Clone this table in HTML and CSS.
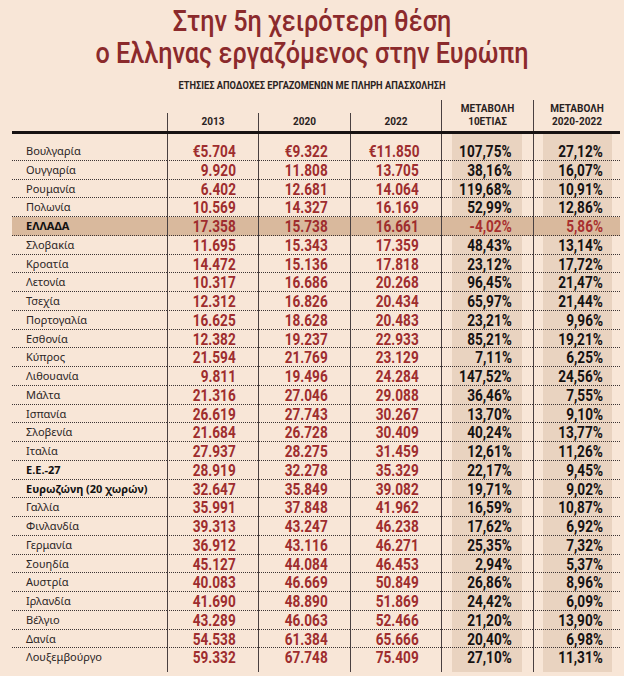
FILE: index.html
```html
<!DOCTYPE html>
<html lang="el">
<head>
<meta charset="utf-8">
<title>Στην 5η χειρότερη θέση</title>
<link rel="stylesheet" href="styles.css">
</head>
<body>
<div class="page">
  <h1 class="title"><span class="tline">Στην 5η χειρότερη θέση</span><span class="tline">ο Ελληνας εργαζόμενος στην Ευρώπη</span></h1>
  <p class="subtitle">ΕΤΗΣΙΕΣ ΑΠΟΔΟΧΕΣ ΕΡΓΑΖΟΜΕΝΩΝ ΜΕ ΠΛΗΡΗ ΑΠΑΣΧΟΛΗΣΗ</p>
  <div class="table">
    <div class="thead">
      <div class="th th-name"></div>
      <div class="th">2013</div>
      <div class="th">2020</div>
      <div class="th">2022</div>
      <div class="th th-chg">ΜΕΤΑΒΟΛΗ<br>10ΕΤΙΑΣ</div>
      <div class="th th-chg">ΜΕΤΑΒΟΛΗ<br>2020-2022</div>
    </div>
    <div class="tbody">
      <div class="row"><div class="c name">Βουλγαρία</div><div class="c num"><span>€5.704</span></div><div class="c num"><span>€9.322</span></div><div class="c num"><span>€11.850</span></div><div class="c pct b1"><span>107,75%</span></div><div class="c pct b2"><span>27,12%</span></div></div>
      <div class="row"><div class="c name">Ουγγαρία</div><div class="c num"><span>9.920</span></div><div class="c num"><span>11.808</span></div><div class="c num"><span>13.705</span></div><div class="c pct b1"><span>38,16%</span></div><div class="c pct b2"><span>16,07%</span></div></div>
      <div class="row"><div class="c name">Ρουμανία</div><div class="c num"><span>6.402</span></div><div class="c num"><span>12.681</span></div><div class="c num"><span>14.064</span></div><div class="c pct b1"><span>119,68%</span></div><div class="c pct b2"><span>10,91%</span></div></div>
      <div class="row"><div class="c name">Πολωνία</div><div class="c num"><span>10.569</span></div><div class="c num"><span>14.327</span></div><div class="c num"><span>16.169</span></div><div class="c pct b1"><span>52,99%</span></div><div class="c pct b2"><span>12,86%</span></div></div>
      <div class="row hl"><div class="c name strong">ΕΛΛΑΔΑ</div><div class="c num"><span>17.358</span></div><div class="c num"><span>15.738</span></div><div class="c num"><span>16.661</span></div><div class="c pct b1 red"><span>-4,02%</span></div><div class="c pct b2 red"><span>5,86%</span></div></div>
      <div class="row"><div class="c name">Σλοβακία</div><div class="c num"><span>11.695</span></div><div class="c num"><span>15.343</span></div><div class="c num"><span>17.359</span></div><div class="c pct b1"><span>48,43%</span></div><div class="c pct b2"><span>13,14%</span></div></div>
      <div class="row"><div class="c name">Κροατία</div><div class="c num"><span>14.472</span></div><div class="c num"><span>15.136</span></div><div class="c num"><span>17.818</span></div><div class="c pct b1"><span>23,12%</span></div><div class="c pct b2"><span>17,72%</span></div></div>
      <div class="row"><div class="c name">Λετονία</div><div class="c num"><span>10.317</span></div><div class="c num"><span>16.686</span></div><div class="c num"><span>20.268</span></div><div class="c pct b1"><span>96,45%</span></div><div class="c pct b2"><span>21,47%</span></div></div>
      <div class="row"><div class="c name">Τσεχία</div><div class="c num"><span>12.312</span></div><div class="c num"><span>16.826</span></div><div class="c num"><span>20.434</span></div><div class="c pct b1"><span>65,97%</span></div><div class="c pct b2"><span>21,44%</span></div></div>
      <div class="row"><div class="c name">Πορτογαλία</div><div class="c num"><span>16.625</span></div><div class="c num"><span>18.628</span></div><div class="c num"><span>20.483</span></div><div class="c pct b1"><span>23,21%</span></div><div class="c pct b2"><span>9,96%</span></div></div>
      <div class="row"><div class="c name">Εσθονία</div><div class="c num"><span>12.382</span></div><div class="c num"><span>19.237</span></div><div class="c num"><span>22.933</span></div><div class="c pct b1"><span>85,21%</span></div><div class="c pct b2"><span>19,21%</span></div></div>
      <div class="row"><div class="c name">Κύπρος</div><div class="c num"><span>21.594</span></div><div class="c num"><span>21.769</span></div><div class="c num"><span>23.129</span></div><div class="c pct b1"><span>7,11%</span></div><div class="c pct b2"><span>6,25%</span></div></div>
      <div class="row"><div class="c name">Λιθουανία</div><div class="c num"><span>9.811</span></div><div class="c num"><span>19.496</span></div><div class="c num"><span>24.284</span></div><div class="c pct b1"><span>147,52%</span></div><div class="c pct b2"><span>24,56%</span></div></div>
      <div class="row"><div class="c name">Μάλτα</div><div class="c num"><span>21.316</span></div><div class="c num"><span>27.046</span></div><div class="c num"><span>29.088</span></div><div class="c pct b1"><span>36,46%</span></div><div class="c pct b2"><span>7,55%</span></div></div>
      <div class="row"><div class="c name">Ισπανία</div><div class="c num"><span>26.619</span></div><div class="c num"><span>27.743</span></div><div class="c num"><span>30.267</span></div><div class="c pct b1"><span>13,70%</span></div><div class="c pct b2"><span>9,10%</span></div></div>
      <div class="row"><div class="c name">Σλοβενία</div><div class="c num"><span>21.684</span></div><div class="c num"><span>26.728</span></div><div class="c num"><span>30.409</span></div><div class="c pct b1"><span>40,24%</span></div><div class="c pct b2"><span>13,77%</span></div></div>
      <div class="row"><div class="c name">Ιταλία</div><div class="c num"><span>27.937</span></div><div class="c num"><span>28.275</span></div><div class="c num"><span>31.459</span></div><div class="c pct b1"><span>12,61%</span></div><div class="c pct b2"><span>11,26%</span></div></div>
      <div class="row"><div class="c name strong">Ε.Ε.-27</div><div class="c num"><span>28.919</span></div><div class="c num"><span>32.278</span></div><div class="c num"><span>35.329</span></div><div class="c pct b1"><span>22,17%</span></div><div class="c pct b2"><span>9,45%</span></div></div>
      <div class="row"><div class="c name strong">Ευρωζώνη (20 χωρών)</div><div class="c num"><span>32.647</span></div><div class="c num"><span>35.849</span></div><div class="c num"><span>39.082</span></div><div class="c pct b1"><span>19,71%</span></div><div class="c pct b2"><span>9,02%</span></div></div>
      <div class="row"><div class="c name">Γαλλία</div><div class="c num"><span>35.991</span></div><div class="c num"><span>37.848</span></div><div class="c num"><span>41.962</span></div><div class="c pct b1"><span>16,59%</span></div><div class="c pct b2"><span>10,87%</span></div></div>
      <div class="row"><div class="c name">Φινλανδία</div><div class="c num"><span>39.313</span></div><div class="c num"><span>43.247</span></div><div class="c num"><span>46.238</span></div><div class="c pct b1"><span>17,62%</span></div><div class="c pct b2"><span>6,92%</span></div></div>
      <div class="row"><div class="c name">Γερμανία</div><div class="c num"><span>36.912</span></div><div class="c num"><span>43.116</span></div><div class="c num"><span>46.271</span></div><div class="c pct b1"><span>25,35%</span></div><div class="c pct b2"><span>7,32%</span></div></div>
      <div class="row"><div class="c name">Σουηδία</div><div class="c num"><span>45.127</span></div><div class="c num"><span>44.084</span></div><div class="c num"><span>46.453</span></div><div class="c pct b1"><span>2,94%</span></div><div class="c pct b2"><span>5,37%</span></div></div>
      <div class="row"><div class="c name">Αυστρία</div><div class="c num"><span>40.083</span></div><div class="c num"><span>46.669</span></div><div class="c num"><span>50.849</span></div><div class="c pct b1"><span>26,86%</span></div><div class="c pct b2"><span>8,96%</span></div></div>
      <div class="row"><div class="c name">Ιρλανδία</div><div class="c num"><span>41.690</span></div><div class="c num"><span>48.890</span></div><div class="c num"><span>51.869</span></div><div class="c pct b1"><span>24,42%</span></div><div class="c pct b2"><span>6,09%</span></div></div>
      <div class="row"><div class="c name">Βέλγιο</div><div class="c num"><span>43.289</span></div><div class="c num"><span>46.063</span></div><div class="c num"><span>52.466</span></div><div class="c pct b1"><span>21,20%</span></div><div class="c pct b2"><span>13,90%</span></div></div>
      <div class="row"><div class="c name">Δανία</div><div class="c num"><span>54.538</span></div><div class="c num"><span>61.384</span></div><div class="c num"><span>65.666</span></div><div class="c pct b1"><span>20,40%</span></div><div class="c pct b2"><span>6,98%</span></div></div>
      <div class="row last"><div class="c name">Λουξεμβούργο</div><div class="c num"><span>59.332</span></div><div class="c num"><span>67.748</span></div><div class="c num"><span>75.409</span></div><div class="c pct b1"><span>27,10%</span></div><div class="c pct b2"><span>11,31%</span></div></div>
    </div>
  </div>
</div>
</body>
</html>
```

FILE: styles.css
```css
html, body {
  margin: 0;
  padding: 0;
  background: #f8e6d7;
}

.page {
  width: 624px;
  height: 676px;
  box-sizing: border-box;
  padding-top: 5px;
  overflow: hidden;
}

.title {
  margin: 0;
  text-align: center;
  font-family: Roboto, "Noto Sans", sans-serif;
  font-weight: 500;
  font-size: 29px;
  color: #8b2a2c;
  transform: scaleX(0.87);
}

.tline {
  display: block;
  height: 32px;
  line-height: 32px;
}

.subtitle {
  margin: 11px 0 0;
  text-align: center;
  font-family: Roboto, sans-serif;
  font-weight: bold;
  font-size: 11px;
  line-height: 12px;
  color: #2a2222;
  transform: scaleX(0.84);
}

.table {
  margin: 8px 0 0 12px;
  width: 608px;
}

.thead,
.row {
  display: grid;
  grid-template-columns: 155px 91px 92px 91px 92px 87px;
}

.thead {
  align-items: end;
  border-bottom: 3px solid #171212;
}

.th {
  font-family: Roboto, sans-serif;
  font-weight: bold;
  font-size: 10px;
  line-height: 13px;
  text-align: center;
  color: #2a2222;
  padding: 2px 0 3px;
  border-left: 1px solid #4a4040;
}

.th-name {
  border-left: none;
}

.c {
  box-sizing: border-box;
  height: 18.75px;
  line-height: 18px;
  border-bottom: 1px dotted #3d3535;
  white-space: nowrap;
}

.row:first-child .c {
  height: 26.75px;
  padding-top: 8px;
}

.row.last .c {
  border-bottom: none;
  height: 24px;
  padding-bottom: 5px;
}

.name {
  padding-left: 14px;
  font-family: "Noto Sans", "Open Sans", sans-serif;
  font-size: 11px;
  color: #2b2525;
}

.name.strong {
  font-weight: bold;
  color: #111;
}

.num,
.pct {
  border-left: 1px solid #4a4040;
  text-align: right;
  font-family: Roboto, sans-serif;
  font-weight: bold;
  font-size: 17px;
}

.num span,
.pct span {
  display: inline-block;
  transform: scaleX(0.8);
  transform-origin: 100% 50%;
}

.num {
  padding-right: 22px;
  color: #9e2d2e;
}

.pct {
  color: #161212;
}

.b1 {
  padding-right: 21px;
  background: linear-gradient(to right, transparent 10px, #e9d3c0 10px, #e9d3c0 calc(100% - 11px), transparent calc(100% - 11px));
}

.b2 {
  padding-right: 17px;
  background: linear-gradient(to right, transparent 9px, #e9d3c0 9px, #e9d3c0 calc(100% - 8px), transparent calc(100% - 8px));
}

.pct.red {
  color: #a8302f;
}

.row.hl .c {
  background: #d9b99d;
}
```
